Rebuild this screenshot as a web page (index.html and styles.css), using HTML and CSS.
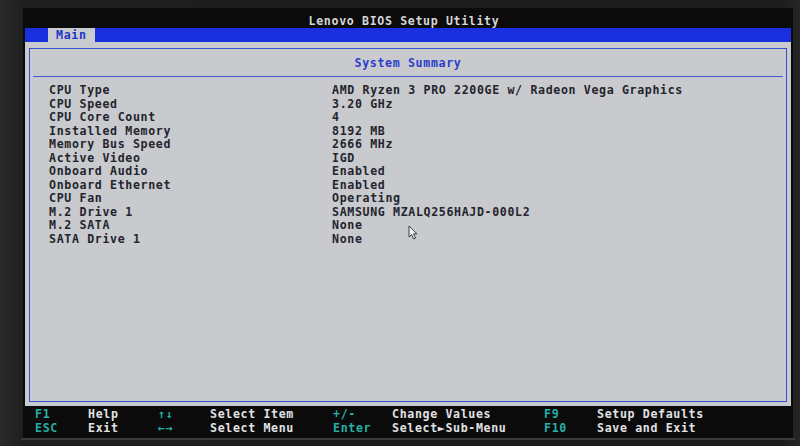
FILE: index.html
```html
<!DOCTYPE html>
<html lang="en">
<head>
    <meta charset="UTF-8">
    <meta name="viewport" content="width=device-width, initial-scale=1.0">
    <title>Lenovo BIOS Setup Utility</title>
    <link rel="stylesheet" href="styles.css">
</head>
<body>
    <div class="screen">
        <div class="title">Lenovo BIOS Setup Utility</div>

        <!-- Pestañas -->
        <div class="tabs">
            <span class="tab">Main</span>
            <span class="tabs-fill"></span>
        </div>

        <!-- Resumen del sistema -->
        <div class="content">
            <div class="summary">
                <div class="summary-head">System Summary</div>
                <div class="rule"></div>
                <div class="rows">
                    <div class="row"><span>CPU Type</span><span>AMD Ryzen 3 PRO 2200GE w/ Radeon Vega Graphics</span></div>
                    <div class="row"><span>CPU Speed</span><span>3.20 GHz</span></div>
                    <div class="row"><span>CPU Core Count</span><span>4</span></div>
                    <div class="row"><span>Installed Memory</span><span>8192 MB</span></div>
                    <div class="row"><span>Memory Bus Speed</span><span>2666 MHz</span></div>
                    <div class="row"><span>Active Video</span><span>IGD</span></div>
                    <div class="row"><span>Onboard Audio</span><span>Enabled</span></div>
                    <div class="row"><span>Onboard Ethernet</span><span>Enabled</span></div>
                    <div class="row"><span>CPU Fan</span><span>Operating</span></div>
                    <div class="row"><span>M.2 Drive 1</span><span>SAMSUNG MZALQ256HAJD-000L2</span></div>
                    <div class="row"><span>M.2 SATA</span><span>None</span></div>
                    <div class="row"><span>SATA Drive 1</span><span>None</span></div>
                </div>

                <!-- Puntero del ratón -->
                <svg class="cursor" width="12" height="15" viewBox="0 0 12 15">
                    <path d="M1 1 L1 12 L3.6 9.6 L5.6 14 L7.6 13.1 L5.6 8.8 L9 8.8 Z" fill="#eeeff0" stroke="#3c3e46" stroke-width="1"/>
                </svg>
            </div>
        </div>

        <!-- Barra de teclas -->
        <div class="footer">
            <span class="key">F1</span><span>Help</span>
            <span class="key">↑↓</span><span>Select Item</span>
            <span class="key">+/-</span><span>Change Values</span>
            <span class="key">F9</span><span>Setup Defaults</span>

            <span class="key">ESC</span><span>Exit</span>
            <span class="key">←→</span><span>Select Menu</span>
            <span class="key">Enter</span><span>Select►Sub-Menu</span>
            <span class="key">F10</span><span>Save and Exit</span>
        </div>
    </div>
    <div class="bezel-edge"></div>
</body>
</html>
```

FILE: styles.css
```css
/* Estilos generales */
    body {
        margin: 0;
        width: 800px;
        height: 446px;
        overflow: hidden;
        background: linear-gradient(90deg, #2a2a2b 0, #1e1e1f 24px, #1c1c1d 780px, #262627 800px);
        font-family: "DejaVu Sans Mono", "Liberation Mono", monospace;
        font-size: 11.6px;
        letter-spacing: 0.65px;
        font-weight: bold;
    }

    .screen {
        width: 770px;
        height: 430px;
        margin: 8px 0 0 23px;
        padding: 0 2px;
        box-sizing: border-box;
        background-color: #0b0b0c;
    }

    .title {
        height: 20px;
        padding: 7px 8px 0 0;
        box-sizing: border-box;
        line-height: 13px;
        text-align: center;
        color: #d6d6d8;
        white-space: pre;
    }

    .tabs {
        height: 14px;
        display: flex;
        background-color: #1a2fde;
        padding-left: 23px;
    }

    .tab {
        padding: 0 8px;
        line-height: 14px;
        background-color: #c9cbce;
        color: #1d34c9;
    }

    .tabs-fill {
        flex: 1;
        background-color: #1a2fde;
    }

    .content {
        height: 364px;
        padding: 6px 4px 4px;
        box-sizing: border-box;
        background-color: #c8cacd;
    }

    .summary {
        position: relative;
        height: 100%;
        border: 1px solid #3a4fd2;
        box-sizing: border-box;
    }

    .summary-head {
        padding: 7.5px 0 6px;
        line-height: 13.5px;
        text-align: center;
        color: #2a3ecb;
    }

    .rule {
        height: 1px;
        margin: 0 3px;
        background-color: #4558d0;
    }

    .rows {
        padding: 7px 0 0 19px;
        color: #23242e;
        line-height: 13.55px;
    }

    .row {
        display: grid;
        grid-template-columns: 283px 1fr;
        white-space: pre;
    }

    .cursor {
        position: absolute;
        left: 378px;
        top: 176px;
    }

    .footer {
        height: 32px;
        padding: 2px 0 0 10px;
        box-sizing: border-box;
        display: grid;
        grid-template-columns: 53px 70px 52px 123px 59px 152px 53px 1fr;
        grid-auto-rows: 13.5px;
        line-height: 13.5px;
        color: #e2e2e4;
        white-space: pre;
    }

    .footer .key {
        color: #25b1a7;
    }

    .bezel-edge {
        width: 774px;
        height: 2px;
        margin-left: 21px;
        background-color: #3a3a3b;
    }
```
